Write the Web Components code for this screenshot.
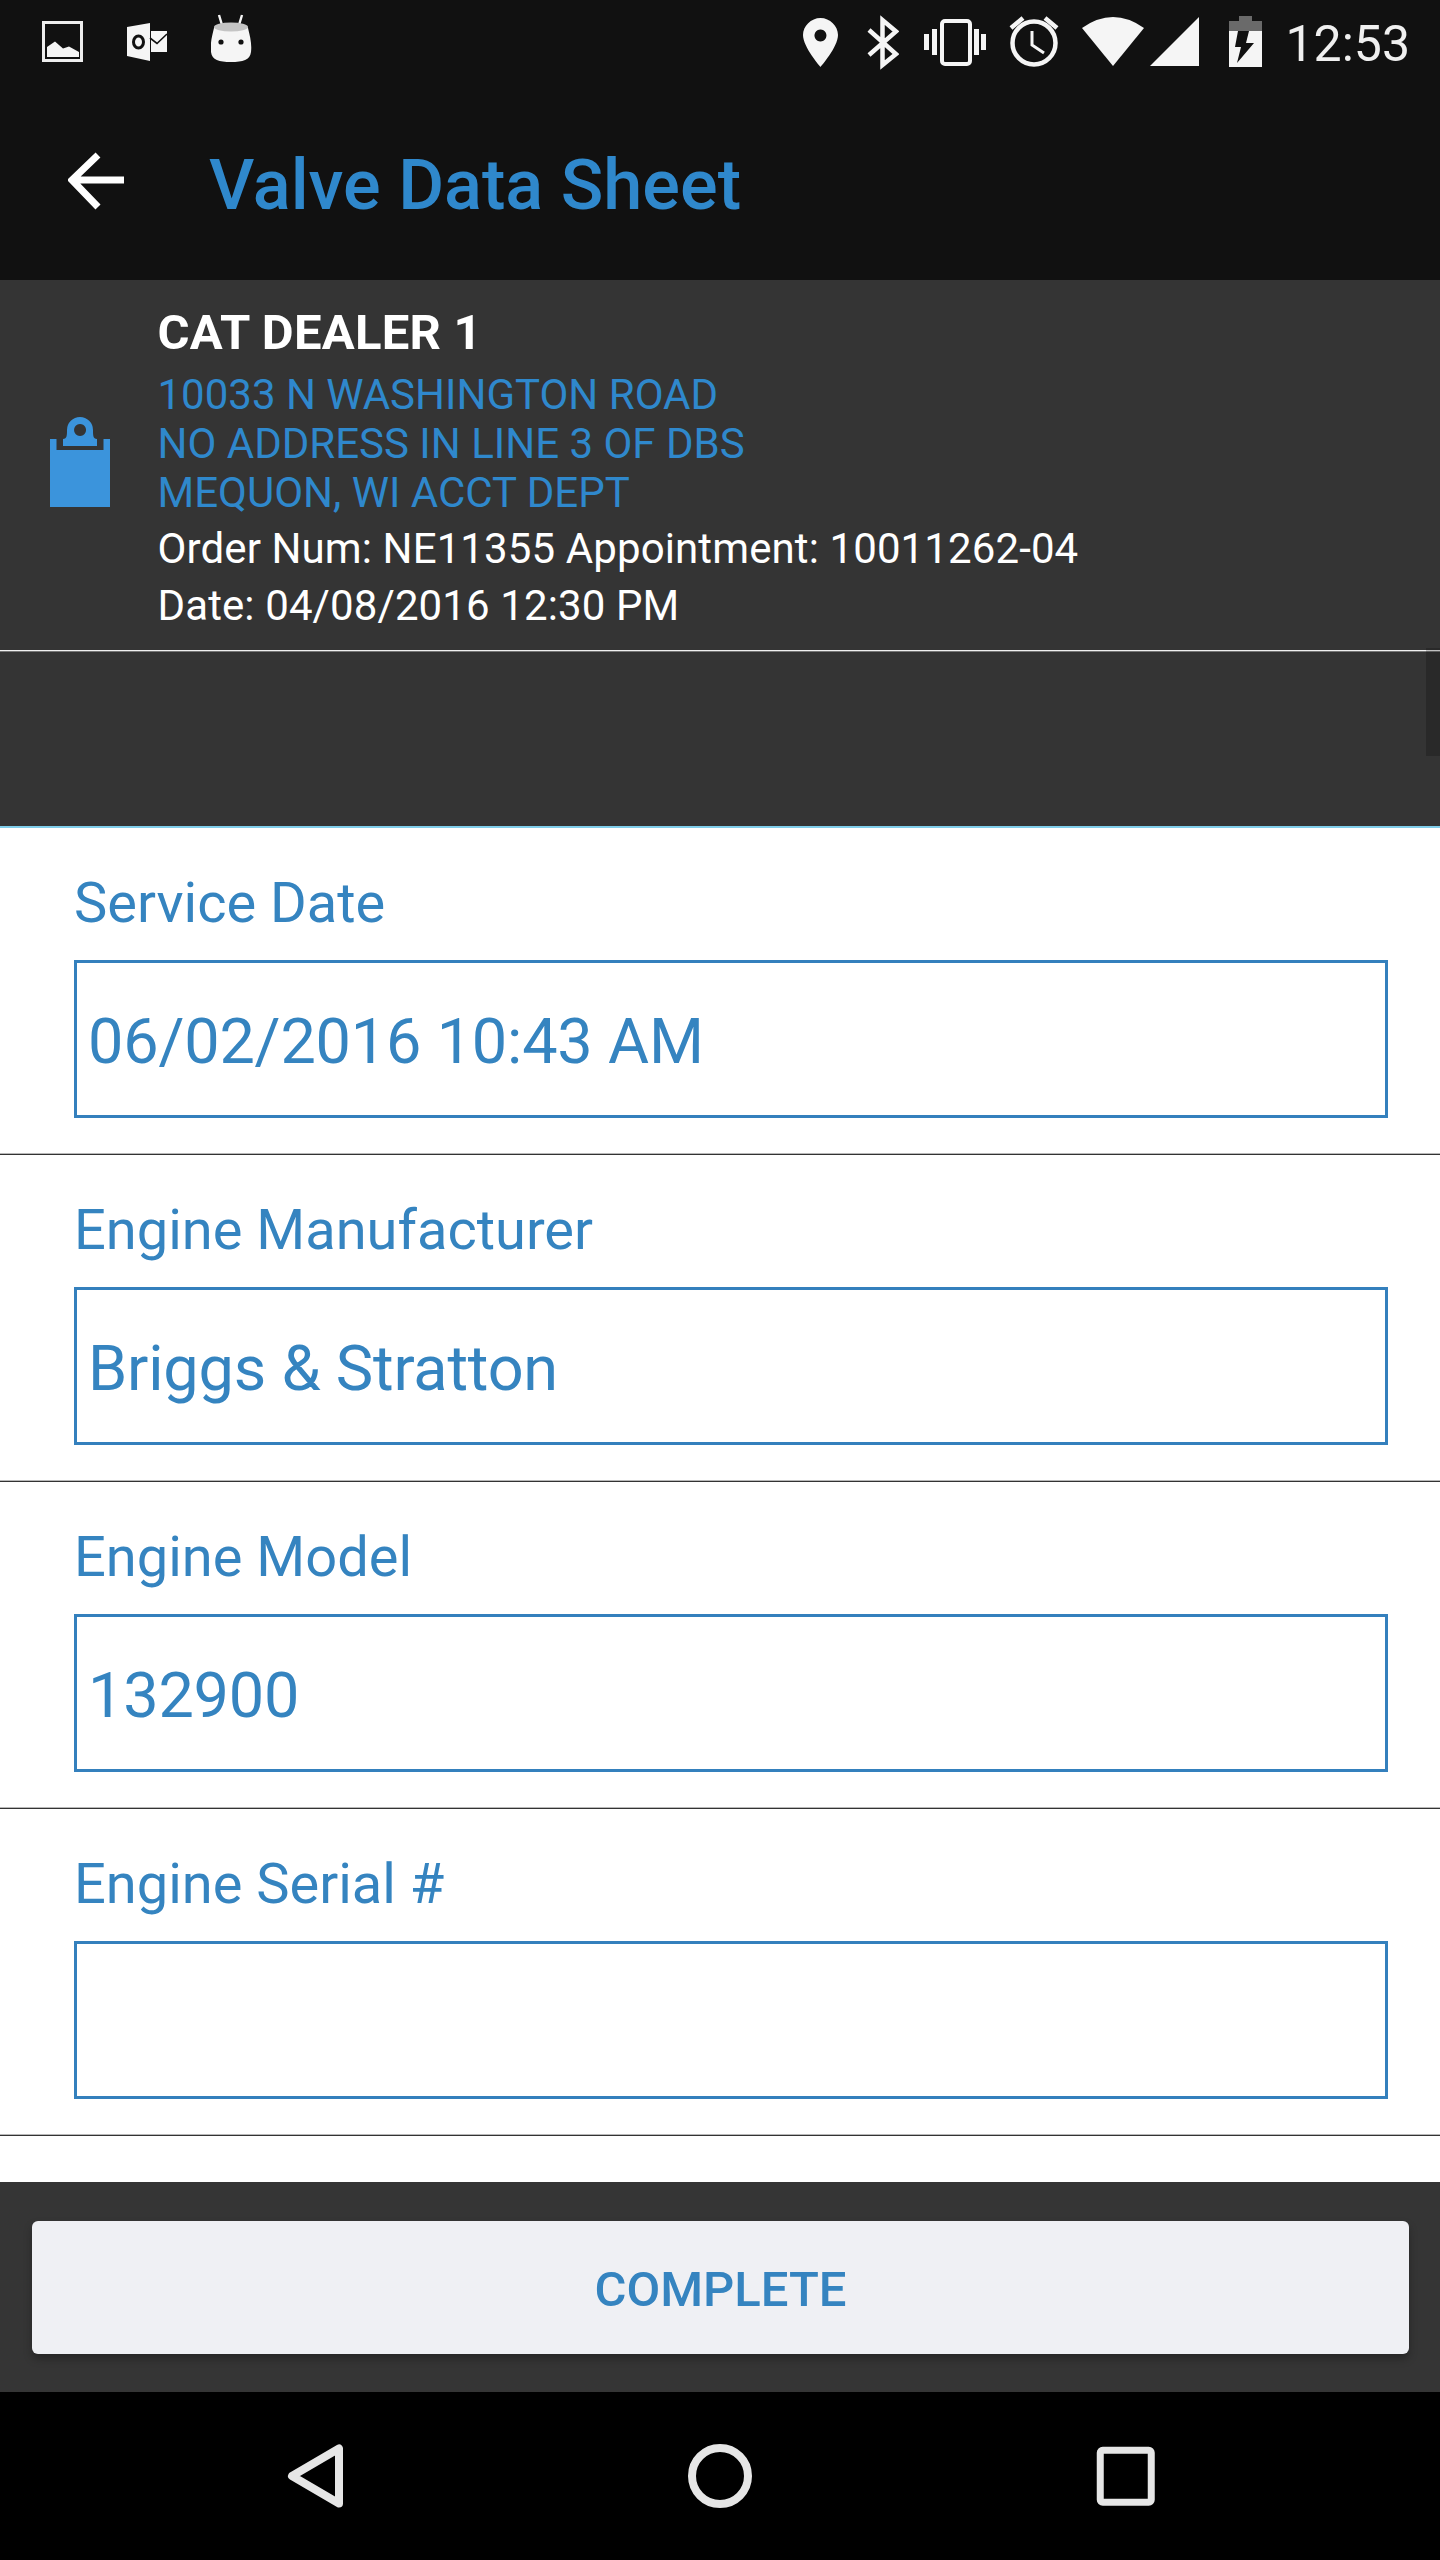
<!DOCTYPE html>
<html><head><meta charset="utf-8"><style>
html,body{margin:0;padding:0;background:#fff}
body{width:1440px;height:2560px;font-family:Roboto,"Liberation Sans",sans-serif}
</style></head><body>
<app-screen>
<status-bar></status-bar>
<tool-bar>Valve Data Sheet</tool-bar>
<order-info>
  <span slot="name">CAT DEALER 1</span>
  <span slot="addr">10033 N WASHINGTON ROAD</span>
  <span slot="addr">NO ADDRESS IN LINE 3 OF DBS</span>
  <span slot="addr">MEQUON, WI ACCT DEPT</span>
  <span slot="meta">Order Num: NE11355 Appointment: 10011262-04</span>
  <span slot="meta">Date: 04/08/2016 12:30 PM</span>
</order-info>
<form-field label="Service Date" value="06/02/2016 10:43 AM"></form-field>
<form-field label="Engine Manufacturer" value="Briggs &amp; Stratton"></form-field>
<form-field label="Engine Model" value="132900"></form-field>
<form-field label="Engine Serial #" value=""></form-field>
<form-spacer></form-spacer>
<action-footer>COMPLETE</action-footer>
<nav-bar></nav-bar>
</app-screen>
<script>
function def(name,html){customElements.define(name,class extends HTMLElement{
  constructor(){super();this.attachShadow({mode:'open'});}
  connectedCallback(){this.shadowRoot.innerHTML=typeof html==='function'?html(this):html;}
});}
const esc=s=>String(s).replace(/&/g,'&amp;').replace(/</g,'&lt;');
def('app-screen',`<style>:host{display:flex;flex-direction:column;width:1440px;height:2560px;overflow:hidden;background:#fff}</style><slot></slot>`);
const ic=(w,body)=>`<svg width="${w}" height="84" viewBox="0 0 ${w} 84" fill="#f5f5f5">${body}</svg>`;
def('status-bar',`<style>:host{display:flex;align-items:center;height:84px;background:#111;padding:0 30px 0 42px;box-sizing:border-box}
svg{display:block;flex:none}
.l{display:flex;gap:44px}
.r{display:flex;align-items:center;margin-left:auto}
.t{font-size:50px;line-height:84px;color:#f0f0f0;margin-left:23px;padding-top:2px;height:82px}
</style>
<div class="l">
${ic(41,`<rect x="1.5" y="22.5" width="38" height="38" fill="none" stroke="#eee" stroke-width="3"/><path d="M5 57V47L13 41.5 21 48.5 27 46.5 37 52V57z"/>`)}
${ic(40,`<path d="M0 27 23 23V61L0 56z"/><path d="M24 31H40V52H24z"/><ellipse cx="11.5" cy="42" rx="5" ry="6" fill="none" stroke="#111" stroke-width="3"/><path d="M23 38 30 43.5 40 34" fill="none" stroke="#111" stroke-width="1.6"/>`)}
${ic(41,`<path d="M8 15 11 25M31 15 28 25" stroke="#f5f5f5" stroke-width="2.4" fill="none"/><path d="M3 28C3 24 37 24 37 28 39 36 41 44 40 52 39 60 32 62 20 62 8 62 1 60 0 52-1 44 1 36 3 28z"/><ellipse cx="20" cy="27" rx="17" ry="4.5" fill="#c4c4c4"/><circle cx="10" cy="42" r="2.6" fill="#111"/><circle cx="30" cy="42" r="2.6" fill="#111"/>`)}
</div>
<div class="r">
${ic(35,`<path fill-rule="evenodd" d="M17.5 18C8 18 0 26 0 35 0 47 17.5 67 17.5 67S35 47 35 35C35 26 27 18 17.5 18zM17.5 29.5A6 6 0 1 1 17.4 29.5z"/>`)}
<span style="width:29px"></span>
${ic(32,`<path d="M2 30 29 54 15.500 65V20L29 31.500 2 55" fill="none" stroke="#f5f5f5" stroke-width="4.500"/>`)}
<span style="width:25px"></span>
${ic(62,`<rect x="18" y="21" width="28" height="43" rx="3" fill="none" stroke="#f5f5f5" stroke-width="4"/><path d="M8 29h5v26H8zM0 34h5v16H0zM50 29h5v26h-5zM57 34h5v16h-5z"/>`)}
<span style="width:23px"></span>
${ic(50,`<circle cx="25" cy="43" r="21.500" fill="none" stroke="#f5f5f5" stroke-width="4.500"/><path d="M2 28 14 18M48 28 36 18" stroke="#f5f5f5" stroke-width="4.500" fill="none"/><path d="M23 31V45L35 53" stroke="#f5f5f5" stroke-width="3" fill="none"/>`)}
<span style="width:23px"></span>
${ic(62,`<path d="M0 28Q31 6 62 28L31 66z"/>`)}
<span style="width:6px"></span>
${ic(49,`<path d="M0 66 49 17V66z"/>`)}
<span style="width:30px"></span>
${ic(33,`<path d="M10 16H23V21H33V31H0V21H10z" fill="#6a6a6a"/><path d="M0 31H33V67H0z"/><path d="M9 31H20L17 43H25L8 63 12 47H6z" fill="#111"/>`)}
<div class="t">12:53</div>
</div>`);
def('tool-bar',`<style>:host{display:flex;align-items:center;height:196px;background:#111;padding-left:68px;box-sizing:border-box}
svg{display:block;flex:none;margin-right:85px}
.t{font-size:70.3px;font-weight:500;color:#2f88cc;line-height:82px;padding-top:6px}
</style>
<svg width="56" height="60" viewBox="0 0 56 60"><path d="M56 28H4M30 3 4 28 30 55" fill="none" stroke="#fff" stroke-width="7"/></svg>
<div class="t"><slot></slot></div>`);
def('order-info',`<style>:host{display:block;position:relative;height:548px;box-sizing:border-box;background:#343434;border-bottom:2px solid #7fcdea}
.top{display:flex;align-items:center;height:370px;box-sizing:border-box;padding-left:50px}
.ic{flex:none;width:60px;margin-right:47.500px;margin-top:-6px}
svg{display:block}
.tx{display:flex;flex-direction:column;padding-top:25px;height:100%;box-sizing:border-box}
.name{font-size:49px;font-weight:700;letter-spacing:.25px;color:#fff;line-height:56px}
.addr{display:flex;flex-direction:column;margin-top:8.500px;font-size:42px;line-height:49px;color:#2f88cc}
.meta{display:flex;flex-direction:column;margin-top:4.500px;font-size:42px;letter-spacing:.11px;line-height:56.5px;color:#fff}
.rule{height:2px;background:linear-gradient(#f0f0f0 50%,#777 50%)}
.scroll{position:absolute;right:0;top:368px;width:14px;height:108px;background:rgba(0,0,0,.2)}
</style>
<div class="top">
<div class="ic"><svg width="60" height="90" viewBox="0 0 60 90" fill="#3b94dc"><path fill-rule="evenodd" d="M13 29V22C17 22 17 18 17 13A13 13 0 0 1 43 13C43 18 43 22 47 22V29zM30 7A6 6 0 1 0 30.100 7z"/><path d="M0 22H6.500V33H53.500V22H60V90H0z"/></svg></div>
<div class="tx">
<div class="name"><slot name="name"></slot></div>
<div class="addr"><slot name="addr"></slot></div>
<div class="meta"><slot name="meta"></slot></div>
</div>
</div>
<div class="rule"></div>
<div class="scroll"></div>`);
def('form-field',el=>`<style>:host{display:block;box-sizing:border-box;height:327px;padding:42px 52px 0 74px;border-bottom:1px solid #333;position:relative;background:#fff}
.lab{font-size:56px;line-height:66px;color:#3584c0}
.box{margin-top:24px;height:158px;box-sizing:border-box;border:3px solid #3480bd;padding:42px 0 0 11px;font-size:63px;letter-spacing:-.2px;color:#3584c0;line-height:74px;white-space:pre}
.sh{position:absolute;left:0;right:0;bottom:0;height:1px;background:#b8b8b8}
</style>
<div class="lab">${esc(el.getAttribute('label'))}</div>
<div class="box">${esc(el.getAttribute('value')||'')}</div>
<div class="sh"></div>`);
def('form-spacer',`<style>:host{display:block;flex:1;background:#fff}</style>`);
def('action-footer',`<style>:host{display:flex;height:210px;box-sizing:border-box;background:#353535;padding:39px 31px 38px 32px}
.b{flex:1;border-radius:6px;background:#eff0f4;box-shadow:0 5px 8px rgba(0,0,0,.28);display:flex;align-items:center;justify-content:center;font-size:49px;font-weight:500;color:#3584c0;padding-top:3px;box-sizing:border-box}
</style><div class="b"><slot></slot></div>`);
def('nav-bar',`<style>:host{display:flex;align-items:center;justify-content:center;gap:335px;height:168px;background:#000}
svg{display:block;flex:none}
</style>
<svg width="70" height="70" viewBox="0 0 70 70"><path d="M12 35 59 7.500V62.500z" fill="none" stroke="#e6e6e6" stroke-width="8" stroke-linejoin="round"/></svg>
<svg width="70" height="70" viewBox="0 0 70 70"><circle cx="35" cy="35" r="28" fill="none" stroke="#e6e6e6" stroke-width="8"/></svg>
<svg width="70" height="70" viewBox="0 0 70 70"><rect x="10.250" y="9.250" width="51" height="52" rx="2.500" fill="none" stroke="#e6e6e6" stroke-width="7"/></svg>`);
</script>
</body></html>
